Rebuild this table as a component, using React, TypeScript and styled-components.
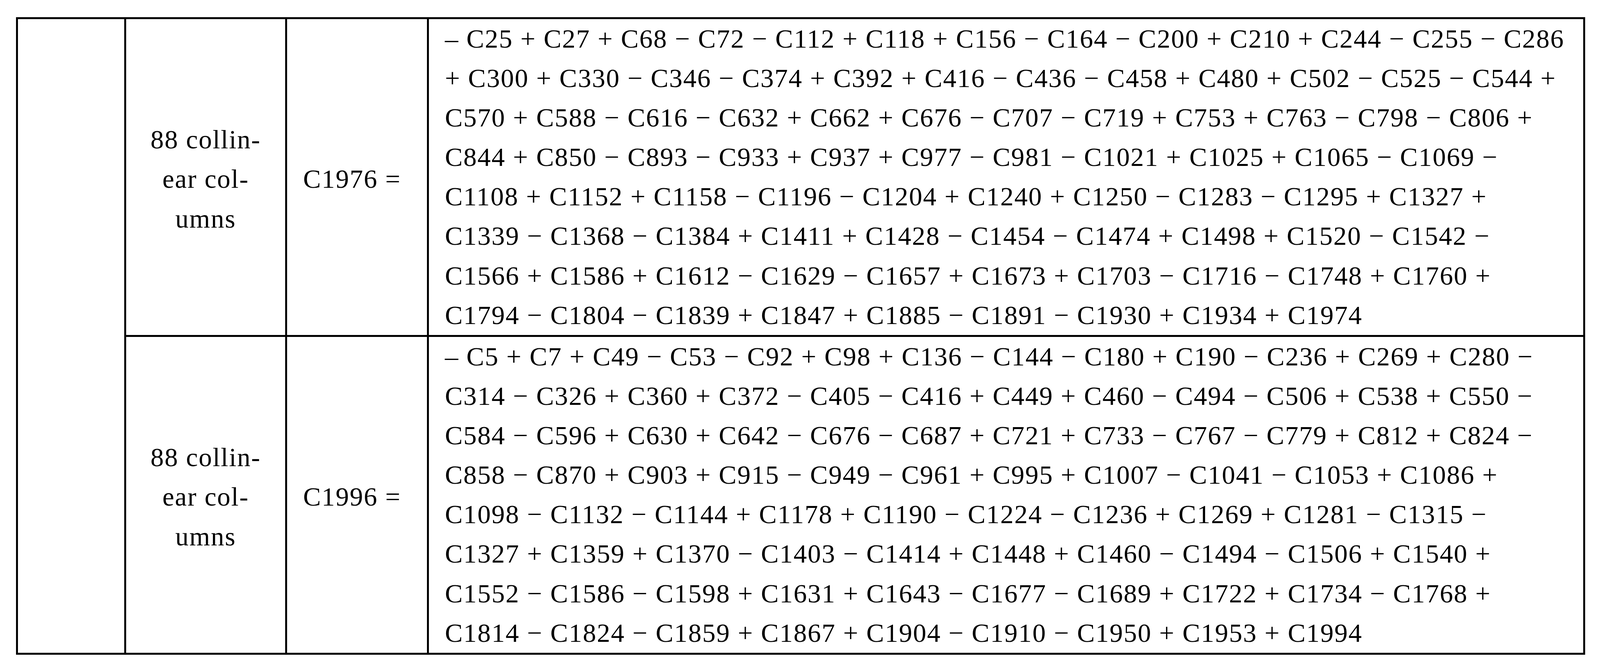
import styled, { createGlobalStyle } from "styled-components";

const GlobalStyle = createGlobalStyle`
	html, body {
		margin: 0;
		padding: 0;
		background: #ffffff;
	}
	body {
		font-family: "Liberation Serif", "Times New Roman", serif;
		color: #000000;
	}
`;

const Page = styled.div`
	padding: 44px 0 0 41px;
`;

const Table = styled.div`
	display: grid;
	width: max-content;
	grid-template-columns: 277px 412px 363px 2960px;
	grid-template-rows: 814px 814px;
	border-top: 5px solid #000;
	border-left: 5px solid #000;
	font-size: 68px;
	letter-spacing: 2px;
	line-height: 101.1px;
`;

const Cell = styled.div<{ $span?: number; $align?: "left" | "center"; $middle?: boolean }>`
	box-sizing: border-box;
	min-width: 0;
	border-right: 5px solid #000;
	border-bottom: 5px solid #000;
	grid-row: ${(props) => (props.$span ? `span ${props.$span}` : "auto")};
	display: flex;
	flex-direction: column;
	justify-content: ${(props) => (props.$middle ? "center" : "flex-start")};
	align-items: ${(props) => (props.$align === "center" ? "center" : "flex-start")};
	padding: ${(props) => (props.$middle ? "11px 0 0 0" : "0")};
	padding-left: ${(props) => (props.$align === "center" ? "0" : "41px")};
`;

const Line = styled.div`
	white-space: pre;
`;

const rows = [
	{
		label: ["88 collin-", "ear col-", "umns"],
		lhs: "C1976 =",
		terms: [
			"– C25 + C27 + C68 − C72 − C112 + C118 + C156 − C164 − C200 + C210 + C244 − C255 − C286",
			"+ C300 + C330 − C346 − C374 + C392 + C416 − C436 − C458 + C480 + C502 − C525 − C544 +",
			"C570 + C588 − C616 − C632 + C662 + C676 − C707 − C719 + C753 + C763 − C798 − C806 +",
			"C844 + C850 − C893 − C933 + C937 + C977 − C981 − C1021 + C1025 + C1065 − C1069 −",
			"C1108 + C1152 + C1158 − C1196 − C1204 + C1240 + C1250 − C1283 − C1295 + C1327 +",
			"C1339 − C1368 − C1384 + C1411 + C1428 − C1454 − C1474 + C1498 + C1520 − C1542 −",
			"C1566 + C1586 + C1612 − C1629 − C1657 + C1673 + C1703 − C1716 − C1748 + C1760 +",
			"C1794 − C1804 − C1839 + C1847 + C1885 − C1891 − C1930 + C1934 + C1974",
		],
	},
	{
		label: ["88 collin-", "ear col-", "umns"],
		lhs: "C1996 =",
		terms: [
			"– C5 + C7 + C49 − C53 − C92 + C98 + C136 − C144 − C180 + C190 − C236 + C269 + C280 −",
			"C314 − C326 + C360 + C372 − C405 − C416 + C449 + C460 − C494 − C506 + C538 + C550 −",
			"C584 − C596 + C630 + C642 − C676 − C687 + C721 + C733 − C767 − C779 + C812 + C824 −",
			"C858 − C870 + C903 + C915 − C949 − C961 + C995 + C1007 − C1041 − C1053 + C1086 +",
			"C1098 − C1132 − C1144 + C1178 + C1190 − C1224 − C1236 + C1269 + C1281 − C1315 −",
			"C1327 + C1359 + C1370 − C1403 − C1414 + C1448 + C1460 − C1494 − C1506 + C1540 +",
			"C1552 − C1586 − C1598 + C1631 + C1643 − C1677 − C1689 + C1722 + C1734 − C1768 +",
			"C1814 − C1824 − C1859 + C1867 + C1904 − C1910 − C1950 + C1953 + C1994",
		],
	},
];

function App() {
	return (
		<>
			<GlobalStyle />
			<Page>
				<Table>
					<Cell $span={2} />
					{rows.map((row) => (
						<>
							<Cell $align="center" $middle key={row.lhs + "-label"}>
								{row.label.map((l) => (
									<Line key={l}>{l}</Line>
								))}
							</Cell>
							<Cell $middle key={row.lhs}>
								<Line>{row.lhs}</Line>
							</Cell>
							<Cell key={row.lhs + "-terms"}>
								{row.terms.map((t, i) => (
									<Line key={i}>{t}</Line>
								))}
							</Cell>
						</>
					))}
				</Table>
			</Page>
		</>
	);
}

export default App;
